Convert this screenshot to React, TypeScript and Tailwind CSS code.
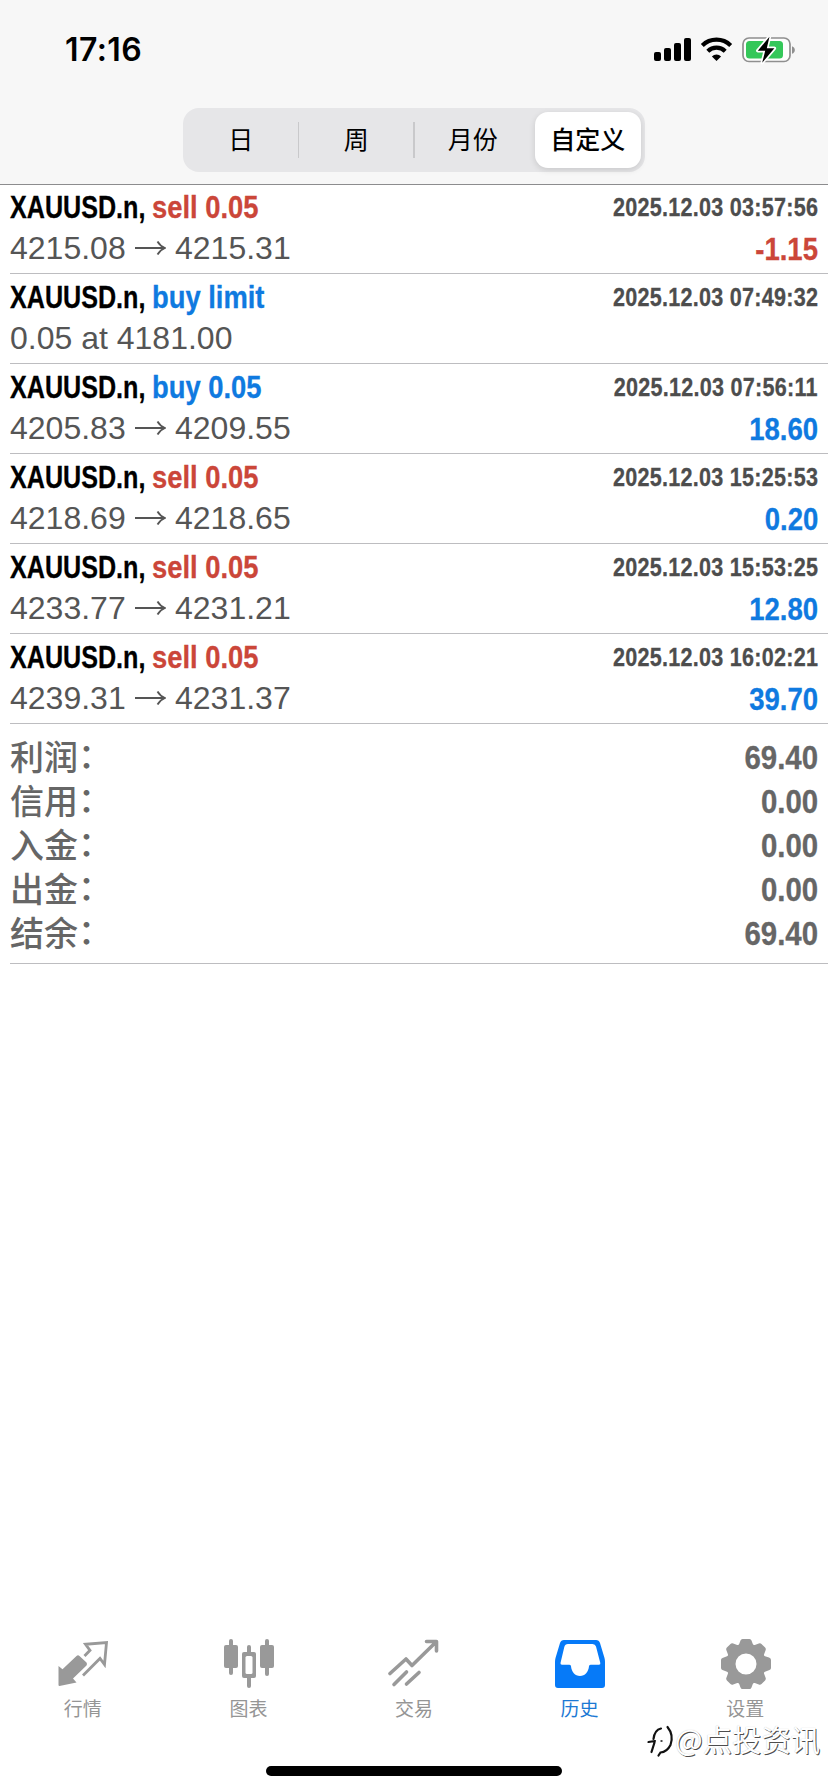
import React from "react";

type Side = "buy" | "sell";

interface Deal {
  symbol: string;
  side: Side;
  action: string;
  time: string;
  open?: string;
  close?: string;
  note?: string;
  profit?: string;
}

const deals: Deal[] = [
  { symbol: "XAUUSD.n", side: "sell", action: "sell 0.05", time: "2025.12.03 03:57:56", open: "4215.08", close: "4215.31", profit: "-1.15" },
  { symbol: "XAUUSD.n", side: "buy", action: "buy limit", time: "2025.12.03 07:49:32", note: "0.05 at 4181.00" },
  { symbol: "XAUUSD.n", side: "buy", action: "buy 0.05", time: "2025.12.03 07:56:11", open: "4205.83", close: "4209.55", profit: "18.60" },
  { symbol: "XAUUSD.n", side: "sell", action: "sell 0.05", time: "2025.12.03 15:25:53", open: "4218.69", close: "4218.65", profit: "0.20" },
  { symbol: "XAUUSD.n", side: "sell", action: "sell 0.05", time: "2025.12.03 15:53:25", open: "4233.77", close: "4231.21", profit: "12.80" },
  { symbol: "XAUUSD.n", side: "sell", action: "sell 0.05", time: "2025.12.03 16:02:21", open: "4239.31", close: "4231.37", profit: "39.70" },
];

const totals = [
  { label: "利润", value: "69.40" },
  { label: "信用", value: "0.00" },
  { label: "入金", value: "0.00" },
  { label: "出金", value: "0.00" },
  { label: "结余", value: "69.40" },
];

const bold = "font-['Liberation_Sans',sans-serif] font-bold whitespace-nowrap [-webkit-text-stroke:0.3px_currentColor]";
const cjk = "font-['Noto_Sans_CJK_SC',sans-serif]";

function StatusBar() {
  return (
    <div className="flex h-[108px] items-start justify-between pl-[65px] pr-[33px] pt-[36px]">
      <span className="font-['Inter',sans-serif] text-[32px] font-semibold leading-[28px] tracking-[0.400px] text-black">17:16</span>
      <svg width="142" height="28" viewBox="0 0 142 28" className="mt-px">
        <rect x="1" y="15" width="7" height="9" rx="2" />
        <rect x="11" y="11" width="7" height="13" rx="2" />
        <rect x="21" y="6" width="7" height="18" rx="2" />
        <rect x="31" y="1" width="7" height="23" rx="2" />
        <g fill="none" stroke="#000" strokeWidth="4.2">
          <path d="M49.3 8.4a20.5 20.5 0 0 1 28.4 0" />
          <path d="M54.8 14.2a12.5 12.5 0 0 1 17.4 0" />
        </g>
        <path d="M63.5 24l-4.6-4.6a6.6 6.6 0 0 1 9.2 0z" />
        <rect x="90" y="1" width="47" height="23.500" rx="6" fill="#fdfdfd" stroke="#8f8f8f" strokeWidth="1.700" />
        <rect x="93" y="4" width="37" height="17.500" rx="3.500" fill="#34c759" />
        <path d="M139 9.200c3.800 1.400 3.800 6.200 0 7.600z" fill="#8f8f8f" />
        <path d="M116.500-.3L104.800 13.700h7.400l-3 12 12.200-14.400h-7.600z" stroke="#fff" strokeWidth="3.400" paintOrder="stroke" strokeLinejoin="round" />
      </svg>
    </div>
  );
}

function PeriodPicker() {
  return (
    <div className={`${cjk} mx-auto grid h-[64px] w-[462px] grid-cols-4 rounded-[16px] bg-[#e6e6e8] text-[25px] font-normal text-black`}>
      <div className="flex items-center justify-center pb-[2px]">日</div>
      <div className="relative flex items-center justify-center pb-[2px] before:absolute before:left-[-1px] before:top-[14px] before:h-[36px] before:w-[1.500px] before:bg-[#c9c9cb]">周</div>
      <div className="relative flex items-center justify-center pb-[2px] pl-[2px] before:absolute before:left-[-1px] before:top-[14px] before:h-[36px] before:w-[1.500px] before:bg-[#c9c9cb]">月份</div>
      <div className="py-1 pl-[5px] pr-1">
        <div className="flex h-full items-center justify-center rounded-[13px] bg-white pb-[2px] font-medium shadow-[0_2px_6px_rgba(0,0,0,0.13)]">自定义</div>
      </div>
    </div>
  );
}

function DealRow({ deal }: { deal: Deal }) {
  const tone = deal.side === "sell" ? "text-[#cb4639]" : "text-[#0f7ae0]";
  const profitTone = deal.profit?.startsWith("-") ? "text-[#cb4639]" : "text-[#0f7ae0]";
  return (
    <div className="ml-[10px] flex h-[90px] flex-col border-b border-[#bdbdc0] pr-[10px] pt-[2px]">
      <div className="flex h-[42px] items-center justify-between">
        <div className="flex text-[32px]">
          <span className={`${bold} w-[142px] origin-left scale-x-[0.785] text-black`}>{deal.symbol},</span>
          <span className={`${bold} origin-left scale-x-[0.855] ${tone}`}>{deal.action}</span>
        </div>
        <div className={`${bold} origin-right scale-x-[0.830] text-[26px] tracking-[0.300px] text-[#4d4d4d]`}>{deal.time}</div>
      </div>
      <div className="flex h-[40px] items-center justify-between">
        <div className="flex items-center font-['Liberation_Sans',sans-serif] text-[32px] text-[#555]">
          {deal.note ?? (
            <>
              <span className="w-[125px]">{deal.open}</span>
              <svg width="31" height="16" viewBox="0 0 31 16" className="mr-[9px]" fill="none" stroke="#555" strokeWidth="1.800">
                <path d="M0 8h29M22.500 1.500Q25 6 30 8Q25 10 22.500 14.500" />
              </svg>
              <span>{deal.close}</span>
            </>
          )}
        </div>
        {deal.profit && <div className={`${bold} ${profitTone} origin-right scale-x-[0.860] pt-[2px] text-[32px]`}>{deal.profit}</div>}
      </div>
    </div>
  );
}

function Totals() {
  return (
    <div className="ml-[10px] h-[240px] border-b border-[#bdbdc0] pr-[10px] pt-[11px] text-[#666]">
      {totals.map((t) => (
        <div key={t.label} className="flex h-[44px] items-center justify-between">
          <div className={`${cjk} flex pb-[2px] text-[34px] font-medium leading-[42px]`}>
            <span>{t.label}</span>
            <span className="-mt-[2px]">：</span>
          </div>
          <div className={`${bold} origin-right scale-x-[0.865] text-[34px]`}>{t.value}</div>
        </div>
      ))}
    </div>
  );
}

function QuotesIcon() {
  return (
    <svg width="52" height="52" viewBox="0 0 52 52" fill="#999">
      <path d="M1.500 28l4 3.300L19.500 18Q21 16.500 22.500 18L29.500 24.500Q30.500 26 29.500 27.500L16 40.500l3.500 4L2.500 48Q1.500 48 1.500 47z" />
      <path d="M27.500 18L33 12.300 28.500 6.300 49.500 4.500 47.500 26.500 43 20.500 26 37.500" fill="none" stroke="#999" strokeWidth="2.800" />
    </svg>
  );
}

function ChartIcon() {
  return (
    <svg width="52" height="52" viewBox="0 0 52 52" fill="#999" className="relative left-px top-px">
      <rect x="6" y="0" width="4" height="36" rx="2" />
      <rect x="1" y="6" width="14" height="23" rx="2" />
      <rect x="42" y="0" width="4" height="37" rx="2" />
      <rect x="37" y="6" width="14" height="23" rx="2" />
      <rect x="24" y="6" width="4" height="43" rx="2" />
      <rect x="19" y="13" width="14" height="26" rx="2" />
      <rect x="22.500" y="17" width="7" height="18" rx="1.500" fill="#fff" />
    </svg>
  );
}

function TradeIcon() {
  return (
    <svg width="52" height="52" viewBox="0 0 52 52" fill="none" stroke="#999" strokeWidth="3.600" strokeLinecap="round" strokeLinejoin="round">
      <path d="M2 35.500L18 21l6 6.500L48 4M38.500 3.500H48.500V13" />
      <path d="M6 46.500L18.500 34M18.500 46L31 34.500" />
    </svg>
  );
}

function HistoryIcon() {
  return (
    <svg width="52" height="52" viewBox="0 0 52 52">
      <path fillRule="evenodd" fill="#067af8" d="M10 2h32q3 0 4 3l4.500 15q.5 2 .5 4v23q0 3-3 3H4q-3 0-3-3V24q0-2 .5-4L6 5q1-3 4-3zM14 6q-3 0-3.700 3L6.500 25q-.3 1.700 1.500 1.700h7.500q1.500 0 1.500 1.500c.5 5.500 4 9.800 9 9.800s8.500-4.300 9-9.800q0-1.500 1.500-1.500H45q1.700 0 1.300-1.700L42 8.500Q41.300 6 38.500 6z" />
    </svg>
  );
}

function GearIcon() {
  return (
    <svg width="52" height="52" viewBox="-1 0 52 52" fill="#999">
      <path fillRule="evenodd" d="M22.500 1h7q1.500 0 2 1.500l1.300 3.500q.6 1.400 2 .9l4-1.500q1.600-.6 2.700.5l3.600 3.600q1.100 1.100.5 2.700l-1.500 4q-.5 1.400.9 2l4 1.300Q51 20 51 22v8q0 1.500-1.500 2l-4.500 1.800q-1.400.6-.9 2l1.500 4q.6 1.600-.5 2.700l-3.600 3.600q-1.100 1.100-2.700.5l-4-1.500q-1.400-.5-2 .9L31.500 49.500Q31 51 29.500 51h-7q-1.500 0-2-1.500L19.200 46q-.6-1.400-2-.9l-4 1.500q-1.600.6-2.700-.5L6.900 42.500q-1.100-1.100-.5-2.700l1.500-4q.5-1.400-.9-2L2.500 32Q1 31.500 1 30v-8q0-1.500 1.500-2L7 18.200q1.400-.6.900-2l-1.500-4q-.6-1.600.5-2.700l3.600-3.600q1.100-1.100 2.700-.5l4 1.500q1.400.5 2-.9l1.300-3.500Q21 1 22.500 1zM26 15.500a10.500 10.500 0 1 0 0 21a10.500 10.500 0 1 0 0-21z" />
    </svg>
  );
}

const tabs = [
  { label: "行情", icon: <QuotesIcon /> },
  { label: "图表", icon: <ChartIcon /> },
  { label: "交易", icon: <TradeIcon /> },
  { label: "历史", icon: <HistoryIcon />, active: true },
  { label: "设置", icon: <GearIcon /> },
];

function Watermark() {
  return (
    <div className="absolute bottom-[34px] right-[8px] flex items-center">
      <svg width="28" height="34" viewBox="0 0 28 34" fill="none" className="mt-[6px] overflow-visible" strokeLinecap="round">
        <g stroke="#111" strokeWidth="2.200">
          <path d="M14 4.500Q7.500 6 6.500 15M1.500 18L8 17M7.500 18.500L4.500 28" />
          <path d="M20.500 3Q27 11 23.500 21Q20 28 13.500 28.500L11.500 31.500" />
          <path d="M14 17h1" strokeWidth="1.400" />
        </g>
      </svg>
      <span className={`${cjk} text-[29.300px] font-normal leading-[36px] text-white [text-shadow:1px_1px_0.500px_rgba(0,0,0,0.7),0_0_1px_rgba(0,0,0,0.25)]`}>@点投资讯</span>
    </div>
  );
}

export default function App() {
  return (
    <div className="relative flex h-[1792px] w-[828px] flex-col bg-white">
      <header className="h-[185px] border-b border-[#8c8c8e] bg-[#f7f7f7]">
        <StatusBar />
        <PeriodPicker />
      </header>
      <main className="-mt-px grow">
        {deals.map((d) => (
          <DealRow key={d.time} deal={d} />
        ))}
        <Totals />
      </main>
      <nav className="grid h-[154px] grid-cols-5">
        {tabs.map((t) => (
          <div key={t.label} className="flex flex-col items-center">
            {t.icon}
            <span className={`${cjk} mt-[4px] text-[19px] leading-[28px] ${t.active ? "text-[#1c79d4]" : "text-[#959595]"}`}>{t.label}</span>
          </div>
        ))}
      </nav>
      <div className="absolute bottom-[16px] left-[266px] h-[10px] w-[296px] rounded-full bg-black" />
      <Watermark />
    </div>
  );
}
